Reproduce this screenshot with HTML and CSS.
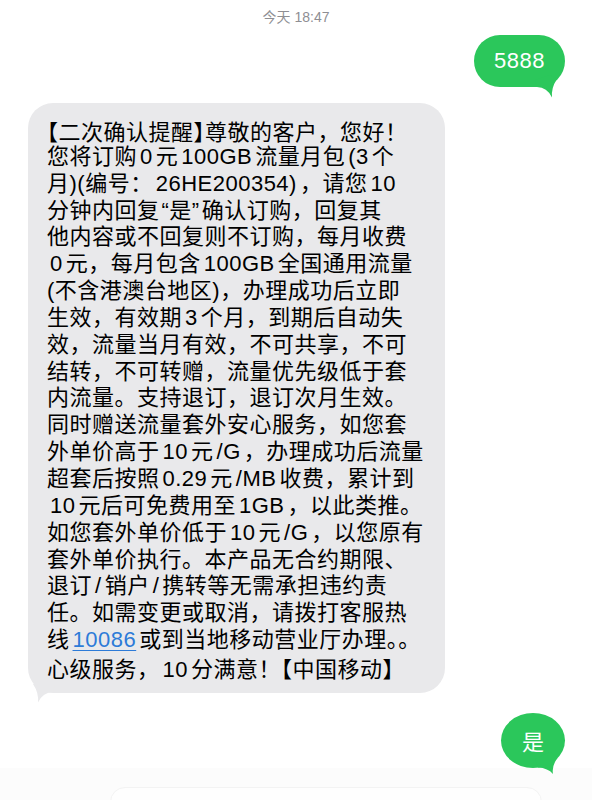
FILE: index.html
```html
<!DOCTYPE html>
<html lang="zh-CN">
<head>
<meta charset="utf-8">
<title>短信</title>
<link rel="stylesheet" href="styles.css">
</head>
<body>
<div class="thread">
  <div class="time">今天 18:47</div>
  <div class="row out r1">
    <div class="bubble green b5888">5888<svg class="tail" viewBox="0 0 30 30"><path d="M7,19 Q17,19 22,29.5 Q21,20 27,11 L20,7 L5,12 Z" fill="#2bc75b"/></svg></div>
  </div>
  <div class="row in">
    <div class="bubble gray">
      <div class="ln"><span class="bk">【</span>二次确认提醒<span class="bk">】</span>尊敬的客户，您好！</div>
      <div class="ln">您将订购<span class="n">0</span>元<span class="n">100GB</span>流量月包<span class="n">(3</span>个</div>
      <div class="ln">月)(编号：<span class="n">26HE200354)</span>，请您<span class="n">10</span></div>
      <div class="ln">分钟内回复<span class="q">“是”</span>确认订购，回复其</div>
      <div class="ln">他内容或不回复则不订购，每月收费</div>
      <div class="ln"><span class="n">0</span>元，每月包含<span class="n">100GB</span>全国通用流量</div>
      <div class="ln">(不含港澳台地区)，办理成功后立即</div>
      <div class="ln">生效，有效期<span class="n">3</span>个月，到期后自动失</div>
      <div class="ln">效，流量当月有效，不可共享，不可</div>
      <div class="ln">结转，不可转赠，流量优先级低于套</div>
      <div class="ln">内流量。支持退订，退订次月生效。</div>
      <div class="ln">同时赠送流量套外安心服务，如您套</div>
      <div class="ln">外单价高于<span class="n">10</span>元<span class="n">/G</span>，办理成功后流量</div>
      <div class="ln">超套后按照<span class="n">0.29</span>元<span class="n">/MB</span>收费，累计到</div>
      <div class="ln"><span class="n">10</span>元后可免费用至<span class="n">1GB</span>，以此类推。</div>
      <div class="ln">如您套外单价低于<span class="n">10</span>元<span class="n">/G</span>，以您原有</div>
      <div class="ln">套外单价执行。本产品无合约期限、</div>
      <div class="ln">退订<span class="n">/</span>销户<span class="n">/</span>携转等无需承担违约责</div>
      <div class="ln">任。如需变更或取消，请拨打客服热</div>
      <div class="ln">线<span class="n link">10086</span>或到当地移动营业厅办理。。</div>
      <div class="ln">心级服务，<span class="n">10</span>分满意！<span class="bk">【</span>中国移动<span class="bk">】</span></div>
      <svg class="tail" viewBox="0 0 30 30"><path d="M7,19 Q17,19 22,29.5 Q21,20 27,11 L20,7 L5,12 Z" fill="#e9e9eb"/></svg>
    </div>
  </div>
  <div class="row out">
    <div class="bubble green yes">是<svg class="tail" viewBox="0 0 30 30"><path d="M8,23.5 Q18,24 23,30 Q21.5,22 27.5,14 L20,8 L5,15 Z" fill="#2bc75b"/></svg></div>
  </div>
</div>
<div class="composer"><div class="field"></div></div>
</body>
</html>
```
FILE: styles.css
```css
* { box-sizing: border-box; }
html, body { margin: 0; padding: 0; }
body {
  width: 592px;
  height: 800px;
  overflow: hidden;
  background: #ffffff;
  font-family: "Liberation Sans", "Noto Sans CJK SC", sans-serif;
}
.thread { display: flex; flex-direction: column; }
.time {
  text-align: center;
  font-size: 14px;
  line-height: 20px;
  color: #8e8e93;
  padding-top: 7px;
}
.row { display: flex; }
.row.out { justify-content: flex-end; padding-right: 27px; }
.row.in { padding-left: 28px; }
.r1 { margin-top: 8px; }
.bubble { position: relative; }
.green { background: #2bc75b; color: #ffffff; }
.b5888 {
  height: 52px;
  line-height: 52px;
  padding: 0 20px;
  border-radius: 26px;
  font-size: 22px;
  letter-spacing: 0.5px;
}
.gray {
  background: #e9e9eb;
  color: #000000;
  width: 417px;
  border-radius: 25px;
  padding: 14px 10px 12px 19px;
  font-size: 22px;
  letter-spacing: 0.5px;
  white-space: nowrap;
  margin-top: 16px;
}
.ln {
  height: 26.85px;
  line-height: 26.85px;
  overflow: visible;
}
.n { margin: 0 3px; }
.bk { font-family: "Noto Sans CJK SC", sans-serif; font-feature-settings: "halt"; }
.q { margin: 0 2px; }
.link { color: #2d7bd8; text-decoration: underline; text-underline-offset: 3px; text-decoration-thickness: 1px; }
.yes {
  width: 64px;
  height: 55px;
  border-radius: 50%;
  display: flex;
  align-items: center;
  justify-content: center;
  font-family: "Noto Sans CJK SC", sans-serif;
  font-size: 22px;
  margin-top: 20px;
}
.tail { position: absolute; width: 30px; height: 30px; display: block; }
.green .tail { right: 5px; }
.b5888 .tail { bottom: -11px; }
.yes .tail { bottom: -6px; }
.gray .tail { left: 2px; bottom: -10px; transform: scaleX(-1); }
.composer {
  height: 40px;
  background: #fcfcfc;
  padding: 19px 50px 0 110px;
}
.field {
  height: 30px;
  border: 1px solid #f3f3f3;
  border-radius: 16px;
  background: #fefefe;
}
```
